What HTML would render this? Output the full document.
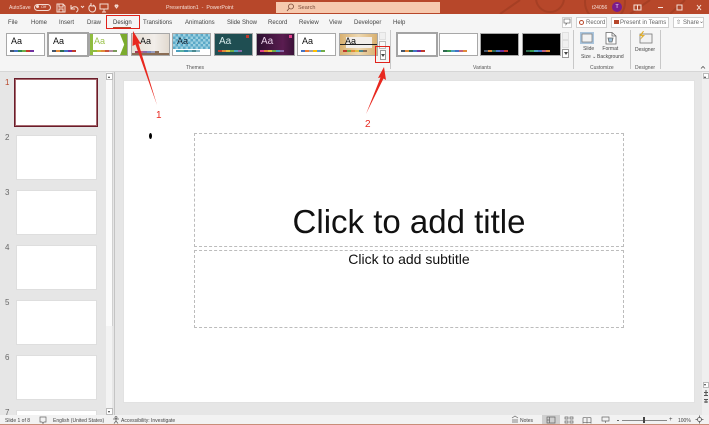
<!DOCTYPE html>
<html><head><meta charset="utf-8"><style>
html,body{margin:0;padding:0}
body{width:709px;height:425px;overflow:hidden;position:relative;background:#e6e6e6;font-family:"Liberation Sans",sans-serif;color:#444}
.a{position:absolute}
.t{position:absolute;white-space:nowrap;font-size:6px;line-height:8px;color:#444}
.w{position:absolute;white-space:nowrap;font-size:5px;line-height:8px;color:#f6e0d8}
.th{position:absolute;top:33px;width:37px;height:21px;background:#fff;border:1px solid #a8a8a8;overflow:hidden}
.aa{position:absolute;left:4px;top:2px;font-size:9px;line-height:11px;color:#111}
.bar{position:absolute;left:3px;bottom:3px;display:flex}
.bar i{display:block;width:4px;height:2px}
.sl{position:absolute;left:16px;width:81px;height:45px;background:#fff;border:1px solid #dedede;box-sizing:border-box}
.n{position:absolute;left:5px;font-size:8px;line-height:9px;color:#666}
.sep{position:absolute;width:1px;background:#c8c8c8;top:30px;height:39px}
.btn{position:absolute;top:17px;height:9px;border:1px solid #cfcfcf;background:#fff;font-size:6px;line-height:9px;color:#666;white-space:nowrap;box-sizing:content-box}
</style></head><body>

<!-- title bar -->
<div class="a" style="left:0;top:0;width:709px;height:14px;background:#b7472a"></div>
<svg class="a" style="left:480px;top:0" width="229" height="14" fill="none" stroke="#a63f24" stroke-width="2"><circle cx="70" cy="-2" r="14"/><circle cx="125" cy="2" r="20"/><path d="M20 14 40 0M150 14 170 0M190 14 205 0"/></svg>
<div class="w" style="left:9px;top:4px">AutoSave</div>
<div class="a" style="left:34px;top:4px;width:15px;height:5px;border:1px solid #f4dcd3;border-radius:4px"></div>
<div class="a" style="left:36px;top:5px;width:3px;height:3px;border-radius:50%;background:#f4dcd3"></div>
<div class="w" style="left:41px;top:3px;font-size:4px;line-height:7px">Off</div>
<svg class="a" style="left:54px;top:2px" width="70" height="11" fill="none" stroke="#f4dcd3" stroke-width="1"><path d="M3 2h6l2 2v6H3zM5 2v3h4V2M5 10V7h4v3"/><path d="M17 3v4h4M17 7c2-3 6-3 7 0 0 2-1 3-2 3"/><path d="M27 4l1.500 1.500L30 4"/><path d="M37 3c-3 1-3 6 1 7 4 0 5-5 1-7M37 1v3h3"/><path d="M46 2h8v5h-8zM50 7v3M48 10h4"/><path d="M61 4h3l-1.500 2zM61 3h3"/></svg>
<div class="w" style="left:166px;top:4px;font-size:5.300px">Presentation1 &nbsp;-&nbsp; PowerPoint</div>
<div class="a" style="left:276px;top:2px;width:164px;height:11px;background:#f6c9ae"></div>
<svg class="a" style="left:286px;top:3px" width="9" height="9" fill="none" stroke="#7a4a38" stroke-width=".8"><circle cx="5" cy="3.500" r="2.500"/><path d="M3 5.500 1 8"/></svg>
<div class="t" style="left:298px;top:4px;color:#7a4a38;font-size:5.500px">Search</div>
<div class="w" style="left:592px;top:4px;font-size:5px">t24056</div>
<div class="a" style="left:612px;top:2px;width:10px;height:10px;border-radius:50%;background:#7a1c8c;color:#f5e6f7;font-size:5.500px;line-height:10px;text-align:center">T</div>
<svg class="a" style="left:632px;top:2px" width="74" height="11" fill="none" stroke="#f6e0d8" stroke-width="1"><path d="M2 3h7v5H2zM5.500 3v5"/><path d="M26 5.500h5"/><path d="M45 3h5v5h-5z"/><path d="M65 3l4 5M69 3l-4 5"/></svg>

<!-- tabs -->
<div class="a" style="left:0;top:14px;width:709px;height:17px;background:#f5f5f5"></div>
<div class="t" style="left:8px;top:19px">File</div>
<div class="t" style="left:31px;top:19px">Home</div>
<div class="t" style="left:59px;top:19px">Insert</div>
<div class="t" style="left:87px;top:19px">Draw</div>
<div class="t" style="left:113px;top:19px;color:#333">Design</div>
<div class="a" style="left:113px;top:27px;width:18px;height:1px;background:#b7472a"></div>
<div class="t" style="left:143px;top:19px">Transitions</div>
<div class="t" style="left:185px;top:19px">Animations</div>
<div class="t" style="left:227px;top:19px">Slide Show</div>
<div class="t" style="left:268px;top:19px">Record</div>
<div class="t" style="left:299px;top:19px">Review</div>
<div class="t" style="left:329px;top:19px">View</div>
<div class="t" style="left:354px;top:19px">Developer</div>
<div class="t" style="left:393px;top:19px">Help</div>

<div class="btn" style="left:562px;width:8px"></div>
<svg class="a" style="left:562px;top:17px" width="10" height="9" fill="none" stroke="#777" stroke-width=".8"><path d="M2 2h6v4H5L4 7.500V6H2z"/></svg>
<div class="btn" style="left:576px;width:29px"><span class="a" style="left:2px;top:2px;width:3px;height:3px;border:1px solid #b7472a;border-radius:50%"></span><span class="a" style="left:9px;top:1px">Record</span></div>
<div class="btn" style="left:611px;width:56px"><span class="a" style="left:2px;top:2px;width:5px;height:4px;background:#b7472a"></span><span class="a" style="left:8px;top:1px">Present in Teams</span></div>
<div class="btn" style="left:673px;width:29px"><span class="a" style="left:2px;top:1px">⇧</span><span class="a" style="left:9px;top:1px">Share</span><span class="a" style="left:25px;top:0">⌄</span></div>

<!-- ribbon -->
<div class="a" style="left:0;top:31px;width:709px;height:40px;background:#f5f5f5"></div>
<div class="a" style="left:0;top:71px;width:709px;height:1px;background:#d6d6d6"></div>

<!-- themes -->
<div class="th" style="left:6px"><div class="aa">Aa</div><div class="bar"><i style="background:#44546a"></i><i style="background:#4472c4"></i><i style="background:#2d8a4f"></i><i style="background:#70ad47"></i><i style="background:#c0392b"></i><i style="background:#7030a0"></i></div></div>
<div class="th" style="left:47px;border:2px solid #a4a4a4;top:32px;width:38px"><div class="aa">Aa</div><div class="bar"><i style="background:#44546a"></i><i style="background:#e08a3a"></i><i style="background:#2d6a4f"></i><i style="background:#4472c4"></i><i style="background:#7030a0"></i><i style="background:#c0392b"></i></div></div>
<div class="th" style="left:89px"><div class="a" style="left:0;top:0;width:3px;height:21px;background:#8fbc3f"></div><div class="a" style="right:0;top:0;width:7px;height:21px;background:#7cab2e;clip-path:polygon(0 0,100% 0,100% 100%,0 100%,60% 50%)"></div><div class="aa" style="color:#9cc34e">Aa</div><div class="bar"><i style="background:#8fbc3f"></i><i style="background:#c8b53a"></i><i style="background:#e08a3a"></i><i style="background:#c9503c"></i><i style="background:#b58ba0"></i><i style="background:#7a9a5a"></i></div></div>
<div class="th" style="left:131px;background:linear-gradient(90deg,#e6ded4,#f2eeea 60%,#e2dad0)"><div class="aa" style="left:8px">Aa</div><div class="a" style="left:0;bottom:0;width:38px;height:2px;background:#8a6d55"></div><div class="bar" style="bottom:2px"><i style="background:#a23a5a"></i><i style="background:#c06080"></i><i style="background:#8a6aa8"></i><i style="background:#7a88c0"></i><i style="background:#9aa0c0"></i><i style="background:#8a6d55"></i></div></div>
<div class="th" style="left:172px;background:#fff"><div class="a" style="left:0;top:0;width:38px;height:15px;background:repeating-conic-gradient(#5aa9c8 0 25%,#9cd0e0 0 50%) 0 0/5px 5px"></div><div class="aa" style="color:#123">Aa</div><div class="bar"><i style="background:#4aa0c0"></i><i style="background:#5ab0a0"></i><i style="background:#3a90b0"></i><i style="background:#6ab0c0"></i><i style="background:#4a8a90"></i><i style="background:#88b8c8"></i></div></div>
<div class="th" style="left:214px;background:#1f4e52"><div class="aa" style="color:#d8ecec;font-size:10px">Aa</div><div class="a" style="right:3px;top:1px;width:3px;height:3px;background:#c0392b"></div><div class="bar"><i style="background:#c0392b"></i><i style="background:#e08a3a"></i><i style="background:#e0c040"></i><i style="background:#70ad47"></i><i style="background:#4aa0c0"></i><i style="background:#8a6aa8"></i></div></div>
<div class="th" style="left:256px;background:linear-gradient(90deg,#2c1030,#5a1c50 70%,#3a1238)"><div class="aa" style="color:#e8d0e8;font-size:10px">Aa</div><div class="a" style="right:2px;top:1px;width:3px;height:3px;background:#e0408a"></div><div class="bar"><i style="background:#e0408a"></i><i style="background:#e08a3a"></i><i style="background:#e0c040"></i><i style="background:#70ad47"></i><i style="background:#4aa0c0"></i><i style="background:#8a6aa8"></i></div></div>
<div class="th" style="left:297px"><div class="aa">Aa</div><div class="bar"><i style="background:#4472c4"></i><i style="background:#ed7d31"></i><i style="background:#a5a5a5"></i><i style="background:#ffc000"></i><i style="background:#5b9bd5"></i><i style="background:#70ad47"></i></div></div>
<div class="th" style="left:339px;background:linear-gradient(90deg,#d8b070,#eed8b0 50%,#d8b070)"><div class="a" style="left:6px;top:3px;width:26px;height:11px;background:#f2eeea"></div><div class="a" style="left:0;top:10px;width:38px;height:1px;background:#222"></div><div class="aa" style="left:5px">Aa</div><div class="bar"><i style="background:#c0392b"></i><i style="background:#70ad47"></i><i style="background:#e08a3a"></i><i style="background:#e0c040"></i><i style="background:#4a8a90"></i><i style="background:#8a6d55"></i></div></div>

<!-- themes scroll -->
<div class="a" style="left:379px;top:32px;width:7px;height:8px;background:#f0f0f0;border:1px solid #e0e0e0;box-sizing:border-box"></div>
<div class="a" style="left:379px;top:41px;width:7px;height:8px;background:#f8f8f8;border:1px solid #bbb;box-sizing:border-box"></div>
<div class="a" style="left:380px;top:50px;width:6px;height:10px;background:#fff;border:1px solid #999;box-sizing:border-box"></div>
<div class="a" style="left:381px;top:54px;width:0;height:0;border:2px solid transparent;border-top:3px solid #444"></div>
<div class="t" style="left:186px;top:64px;color:#555;font-size:5px">Themes</div>
<div class="sep" style="left:390px"></div>

<!-- variants -->
<div class="th" style="left:396px;top:32px;border:2px solid #a4a4a4;width:38px"><div class="bar" style="left:3px"><i style="background:#44546a"></i><i style="background:#e08a3a"></i><i style="background:#2d6a4f"></i><i style="background:#4472c4"></i><i style="background:#7030a0"></i><i style="background:#c0392b"></i></div></div>
<div class="th" style="left:439px"><div class="bar"><i style="background:#2d6a4f"></i><i style="background:#3a9a50"></i><i style="background:#4aa0c0"></i><i style="background:#4472c4"></i><i style="background:#c06080"></i><i style="background:#e08a3a"></i></div></div>
<div class="th" style="left:480px;background:#000"><div class="bar"><i style="background:#44546a"></i><i style="background:#e08a3a"></i><i style="background:#2d6a4f"></i><i style="background:#4472c4"></i><i style="background:#7030a0"></i><i style="background:#c0392b"></i></div></div>
<div class="th" style="left:522px;background:#000"><div class="bar"><i style="background:#2d6a4f"></i><i style="background:#3a9a50"></i><i style="background:#4aa0c0"></i><i style="background:#4472c4"></i><i style="background:#c06080"></i><i style="background:#e08a3a"></i></div></div>
<div class="a" style="left:562px;top:32px;width:7px;height:8px;background:#f0f0f0;border:1px solid #e0e0e0;box-sizing:border-box"></div>
<div class="a" style="left:562px;top:40px;width:7px;height:8px;background:#f0f0f0;border:1px solid #e0e0e0;box-sizing:border-box"></div>
<div class="a" style="left:562px;top:49px;width:7px;height:9px;background:#fff;border:1px solid #999;box-sizing:border-box"></div>
<div class="a" style="left:564px;top:52px;width:0;height:0;border:2px solid transparent;border-top:3px solid #444"></div>
<div class="t" style="left:473px;top:64px;color:#555;font-size:5px">Variants</div>
<div class="sep" style="left:573px"></div>

<!-- customize -->
<svg class="a" style="left:579px;top:32px" width="16" height="13" fill="none"><rect x="1" y="0" width="14" height="12" fill="#a9c4dc"/><rect x="3" y="2" width="10" height="8" fill="#f2f2f2" stroke="#777" stroke-width=".7"/></svg>
<div class="t" style="left:581px;top:46px;font-size:5px;line-height:7.500px;text-align:center">Slide<br>Size ⌄</div>
<svg class="a" style="left:604px;top:31px" width="14" height="14" fill="none" stroke="#666" stroke-width=".8"><path d="M2 1.500h6l4 3.500v8H2z" fill="#fff"/><path d="M8 1.500v3.500h4"/><path d="M4 7h5l-1 4H5z" fill="#9fc0d8"/></svg>
<div class="t" style="left:597px;top:46px;font-size:5px;line-height:7.500px;text-align:center">Format<br>Background</div>
<div class="t" style="left:590px;top:64px;color:#555;font-size:5px">Customize</div>
<div class="sep" style="left:630px"></div>

<!-- designer -->
<svg class="a" style="left:637px;top:31px" width="16" height="13" fill="none"><rect x="3" y="3" width="12" height="9" fill="#f2f2f2" stroke="#777" stroke-width=".8"/><path d="M6 0 2 5h3L3 9l5-5H5l2-4z" fill="#e0b030"/></svg>
<div class="t" style="left:635px;top:47px;font-size:5px;line-height:7px">Designer</div>
<div class="t" style="left:635px;top:64px;color:#555;font-size:5px">Designer</div>
<div class="sep" style="left:660px"></div>
<svg class="a" style="left:700px;top:65px" width="6" height="5" fill="none" stroke="#555" stroke-width=".8"><path d="M1 3.500 3 1.500 5 3.500"/></svg>

<!-- left panel -->
<div class="a" style="left:106px;top:72px;width:6px;height:343px;background:#f3f3f3"></div>
<div class="a" style="left:106px;top:80px;width:7px;height:246px;background:#fbfbfb;border-right:1px solid #d0d0d0;box-sizing:border-box"></div>
<div class="a" style="left:106px;top:73px;width:7px;height:7px;background:#fff;border:1px solid #bbb;box-sizing:border-box"></div>
<div class="a" style="left:108px;top:75px;width:0;height:0;border:1.500px solid transparent;border-bottom:2px solid #333"></div>
<div class="a" style="left:106px;top:408px;width:7px;height:7px;background:#fff;border:1px solid #bbb;box-sizing:border-box"></div>
<div class="a" style="left:108px;top:411px;width:0;height:0;border:1.500px solid transparent;border-top:2px solid #333"></div>
<div class="a" style="left:114px;top:72px;width:1px;height:343px;background:#c4c4c4"></div>

<div class="n" style="top:78px;color:#b7472a">1</div>
<div class="a" style="left:14px;top:78px;width:84px;height:49px;background:#fff;border:1px solid #6a1c2a;outline:1px solid #a86a70;outline-offset:-2px;box-sizing:border-box"></div>
<div class="n" style="top:133px">2</div><div class="sl" style="top:135px"></div>
<div class="n" style="top:188px">3</div><div class="sl" style="top:190px"></div>
<div class="n" style="top:243px">4</div><div class="sl" style="top:245px"></div>
<div class="n" style="top:298px">5</div><div class="sl" style="top:300px"></div>
<div class="n" style="top:353px">6</div><div class="sl" style="top:355px"></div>
<div class="n" style="top:408px">7</div><div class="sl" style="top:410px;height:5px;border-bottom:0"></div>

<!-- slide -->
<div class="a" style="left:123px;top:80px;width:572px;height:323px;background:#fff;border:1px solid #e2e2e2;box-sizing:border-box"></div>
<div class="a" style="left:194px;top:133px;width:430px;height:114px;border:1px dashed #bcbcbc;box-sizing:border-box"></div>
<div class="a" style="left:194px;top:250px;width:430px;height:78px;border:1px dashed #bcbcbc;box-sizing:border-box"></div>
<div class="a" style="left:194px;top:202px;width:430px;text-align:center;font-size:33px;line-height:40px;color:#111;white-space:nowrap">Click to add title</div>
<div class="a" style="left:194px;top:251px;width:430px;text-align:center;font-size:14px;line-height:17px;color:#111;white-space:nowrap">Click to add subtitle</div>
<div class="a" style="left:149px;top:133px;width:3px;height:6px;border-radius:50%;background:#000"></div>

<!-- right scroll -->
<div class="a" style="left:702px;top:72px;width:7px;height:343px;background:#efefef"></div>
<div class="a" style="left:703px;top:73px;width:6px;height:6px;background:#fff;border:1px solid #bbb;box-sizing:border-box"></div>
<div class="a" style="left:704px;top:75px;width:0;height:0;border:1.500px solid transparent;border-bottom:2px solid #333"></div>
<div class="a" style="left:703px;top:382px;width:6px;height:6px;background:#fff;border:1px solid #bbb;box-sizing:border-box"></div>
<div class="a" style="left:704px;top:384px;width:0;height:0;border:1.500px solid transparent;border-top:2px solid #333"></div>
<svg class="a" style="left:703px;top:389px" width="6" height="16" fill="none" stroke="#555" stroke-width="1"><path d="M3 1v5M1 3.500h4M1 6.500h4M3 10v4M1 10.500h4M1 13h4"/></svg>

<!-- status bar -->
<div class="a" style="left:0;top:415px;width:709px;height:9px;background:#f2f2f2"></div>
<div class="a" style="left:0;top:424px;width:709px;height:1px;background:#c98d78"></div>
<div class="t" style="left:5px;top:417px;font-size:5px">Slide 1 of 8</div>
<svg class="a" style="left:39px;top:416px" width="8" height="8" fill="none" stroke="#666" stroke-width=".7"><path d="M1 1h6v5H5l-1 1.500L3 6H1z"/></svg>
<div class="t" style="left:53px;top:417px;font-size:5px">English (United States)</div>
<svg class="a" style="left:112px;top:416px" width="8" height="8" fill="none" stroke="#666" stroke-width=".8"><circle cx="4" cy="1.500" r="1"/><path d="M1 3h6M4 3v2M4 5 2 7.500M4 5l2 2.500"/></svg>
<div class="t" style="left:121px;top:417px;font-size:5px">Accessibility: Investigate</div>
<svg class="a" style="left:511px;top:415px" width="8" height="9" fill="none" stroke="#666" stroke-width=".7"><path d="M1 3 4 1l3 2M1 5h6M1 7h6"/></svg>
<div class="t" style="left:520px;top:417px;font-size:5px">Notes</div>
<div class="a" style="left:542px;top:415px;width:18px;height:9px;background:#cfcfcf"></div>
<svg class="a" style="left:546px;top:416px" width="90" height="8" fill="none" stroke="#666" stroke-width=".7"><path d="M1 1h8v6H1zM3.500 1v6M1 4h2.500"/><path d="M19 1h3v2h-3zM24 1h3v2h-3zM19 5h3v2h-3zM24 5h3v2h-3z"/><path d="M37 2c2-1 3-1 4 0 1-1 2-1 4 0v5c-2-1-3-1-4 0-1-1-2-1-4 0zM41 2v5"/><path d="M56 1h7v4h-7zM59.500 5v2"/></svg>
<div class="a" style="left:617px;top:420px;width:2px;height:1px;background:#666"></div>
<div class="a" style="left:622px;top:420px;width:45px;height:1px;background:#888"></div>
<div class="a" style="left:643px;top:417px;width:2px;height:6px;background:#444"></div>
<div class="t" style="left:669px;top:416px;font-size:6px">+</div>
<div class="t" style="left:678px;top:417px;font-size:5px">100%</div>
<svg class="a" style="left:695px;top:415px" width="9" height="9" fill="none" stroke="#555" stroke-width=".8"><circle cx="4.500" cy="4.500" r="2"/><path d="M4.500 .5v2M4.500 6.500v2M.5 4.500h2M6.500 4.500h2"/></svg>

<!-- red annotations -->
<div class="a" style="left:106px;top:15px;width:34px;height:14px;border:1px solid #e0231c;box-sizing:border-box"></div>
<div class="a" style="left:375px;top:46px;width:15px;height:17px;border:1px solid #e0231c;box-sizing:border-box"></div>
<svg class="a" style="left:0;top:0" width="709" height="425"><path d="M133 31 141 44 138.500 43.500 157 105 135.500 44.500 132.500 46z" fill="#e8281f"/><path d="M384 67 386 80 383.500 78.500 366 114 380.500 77.500 378 78z" fill="#e8281f"/></svg>
<div class="a" style="left:156px;top:110px;font-size:10px;line-height:12px;color:#e8281f">1</div>
<div class="a" style="left:365px;top:119px;font-size:10px;line-height:12px;color:#e8281f">2</div>
</body></html>
